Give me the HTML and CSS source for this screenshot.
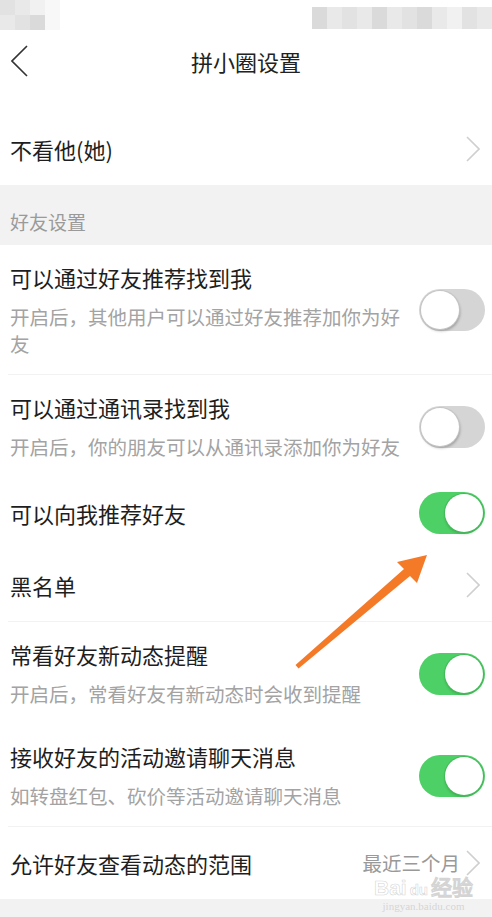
FILE: index.html
```html
<!DOCTYPE html>
<html lang="zh-CN">
<head>
    <meta charset="UTF-8">
    <meta name="viewport" content="width=device-width, initial-scale=1.0">
    <title>拼小圈设置</title>
    <link rel="stylesheet" href="styles.css">
</head>
<body>
<div class="page">
    <!-- barre d'état floutée -->
    <div class="status">
        <div class="blur-left">
            <span class="px g1"></span><span class="px g2"></span><span class="px g4"></span><span class="px g5"></span>
            <span class="px g2"></span><span class="px g1"></span><span class="px g3"></span><span class="px g5"></span>
        </div>
        <div class="blur-right">
            <span class="px g3"></span><span class="px g2"></span><span class="px g1"></span><span class="px g2"></span>
            <span class="px g3"></span><span class="px g2"></span><span class="px g1"></span><span class="px g3"></span>
            <span class="px g2"></span><span class="px g4"></span><span class="px g1"></span><span class="px g2"></span>
        </div>
    </div>

    <div class="navbar">
        <svg class="back" width="18" height="32" viewBox="0 0 18 32">
            <polyline points="16,1 1,16 16,31" fill="none" stroke="#333" stroke-width="1.6"/>
        </svg>
        <div class="nav-title">拼小圈设置</div>
    </div>

    <div class="group group-top">
        <div class="row row-single">
            <div class="row-title">不看他(她)</div>
            <svg class="chevron" width="14" height="26" viewBox="0 0 14 26">
                <polyline points="1,1 13,13 1,25" fill="none" stroke="#cfcfcf" stroke-width="1.6"/>
            </svg>
        </div>
    </div>

    <div class="section-title">好友设置</div>

    <div class="group">
        <div class="row row-double">
            <div class="row-text">
                <div class="row-title">可以通过好友推荐找到我</div>
                <div class="row-desc">开启后，其他用户可以通过好友推荐加你为好友</div>
            </div>
            <div class="switch"></div>
        </div>
        <div class="divider"></div>
        <div class="row row-double">
            <div class="row-text">
                <div class="row-title">可以通过通讯录找到我</div>
                <div class="row-desc">开启后，你的朋友可以从通讯录添加你为好友</div>
            </div>
            <div class="switch"></div>
        </div>
        <div class="row row-single">
            <div class="row-title">可以向我推荐好友</div>
            <div class="switch on"></div>
        </div>
        <div class="row row-single row-link">
            <div class="row-title">黑名单</div>
            <svg class="chevron" width="14" height="26" viewBox="0 0 14 26">
                <polyline points="1,1 13,13 1,25" fill="none" stroke="#cfcfcf" stroke-width="1.6"/>
            </svg>
        </div>
        <div class="divider"></div>
        <div class="row row-double">
            <div class="row-text">
                <div class="row-title">常看好友新动态提醒</div>
                <div class="row-desc">开启后，常看好友有新动态时会收到提醒</div>
            </div>
            <div class="switch on"></div>
        </div>
        <div class="row row-double">
            <div class="row-text">
                <div class="row-title">接收好友的活动邀请聊天消息</div>
                <div class="row-desc">如转盘红包、砍价等活动邀请聊天消息</div>
            </div>
            <div class="switch on"></div>
        </div>
        <div class="divider"></div>
        <div class="row row-single row-link">
            <div class="row-title">允许好友查看动态的范围</div>
            <div class="row-value">最近三个月</div>
            <svg class="chevron" width="14" height="26" viewBox="0 0 14 26">
                <polyline points="1,1 13,13 1,25" fill="none" stroke="#cfcfcf" stroke-width="1.6"/>
            </svg>
        </div>
    </div>

    <div class="bottom-gray"></div>

    <!-- flèche d'annotation -->
    <svg class="arrow" width="492" height="917" viewBox="0 0 492 917">
        <polygon points="427,555 417,583 410,576 298.5,668.5 295.5,665 404,569 397,562" fill="#f47a28"/>
    </svg>

    <div class="watermark">
        <div class="wm-logo">Bai<span class="wm-du">du</span>经验</div>
        <div class="wm-url">jingyan.baidu.com</div>
    </div>
</div>
</body>
</html>
```

FILE: styles.css
```css
/* Styles généraux */
body {
    margin: 0;
    background: #fff;
    font-family: "Noto Sans CJK SC", "Noto Sans", sans-serif;
    color: #222;
}

.page {
    position: relative;
    width: 492px;
    height: 917px;
    overflow: hidden;
    background: #fff;
}

/* barre d'état */
.status {
    height: 30px;
    display: flex;
    justify-content: space-between;
}

.blur-left {
    display: grid;
    grid-template-columns: repeat(4, 15px);
    grid-template-rows: repeat(2, 15px);
}

.blur-right {
    display: grid;
    grid-template-columns: repeat(12, 15px);
    grid-template-rows: 22px;
    margin-top: 7px;
}

.px { display: block; }
.g1 { background: #e2e2e2; }
.g2 { background: #e9e9e9; }
.g3 { background: #dadada; }
.g4 { background: #f1f1f1; }
.g5 { background: #f8f8f8; }

/* barre de navigation */
.navbar {
    height: 62px;
    display: flex;
    align-items: center;
    justify-content: center;
    position: relative;
}

.back {
    position: absolute;
    left: 11px;
    top: 15px;
}

.nav-title {
    font-size: 22px;
    line-height: 30px;
    color: #222;
}

/* lignes */
.group-top {
    padding-top: 21px;
}

.row {
    display: flex;
    align-items: center;
    padding-left: 10px;
    padding-right: 7px;
}

.row-single {
    padding-top: 22px;
    padding-bottom: 22px;
}

.row-single .switch {
    margin: -7px 0;
}

.row-double {
    padding-top: 18px;
    padding-bottom: 17px;
}

.row-text {
    flex: 1;
    margin-right: 14px;
}

.row-title {
    flex: 1;
    font-size: 22px;
    line-height: 28px;
    color: #1e1e1e;
}

.row-desc {
    margin-top: 12px;
    font-size: 19.5px;
    line-height: 27px;
    color: #a3a3a3;
}

.row-value {
    font-size: 19.5px;
    line-height: 28px;
    color: #999;
    margin-right: 6px;
}

.chevron {
    flex: none;
    margin-right: 5px;
}

.divider {
    height: 1px;
    margin-left: 8px;
    background: #f2f2f2;
}

.section-title {
    height: 60px;
    box-sizing: border-box;
    padding: 25px 10px 0;
    background: #f2f2f2;
    font-size: 19px;
    line-height: 24px;
    color: #9a9a9a;
}

.bottom-gray {
    height: 20px;
    background: #f2f2f2;
}

/* interrupteurs */
.switch {
    flex: none;
    position: relative;
    width: 66px;
    height: 42px;
    border-radius: 21px;
    background: #d5d5d5;
}

.switch::after {
    content: "";
    position: absolute;
    top: 2px;
    left: 2px;
    width: 38px;
    height: 38px;
    border-radius: 50%;
    background: #fff;
    box-shadow: 0 0 0 1px #c4c4c4, 1px 2px 3px rgba(0, 0, 0, 0.3);
}

.switch.on {
    background: #4dd065;
}

.switch.on::after {
    left: auto;
    right: 2px;
    box-shadow: 0 0 0 1px #46b95c, 0 2px 3px rgba(0, 0, 0, 0.2);
}

/* flèche et filigrane */
.arrow {
    position: absolute;
    left: 0;
    top: 0;
    pointer-events: none;
}

.watermark {
    position: absolute;
    left: 374px;
    top: 877px;
    text-align: center;
    pointer-events: none;
}

.wm-logo {
    font-family: "Liberation Sans", sans-serif;
    font-size: 21px;
    font-weight: bold;
    line-height: 21px;
    color: rgba(255, 255, 255, 0.6);
    -webkit-text-stroke: 0.6px rgba(170, 170, 170, 0.5);
}

.wm-du {
    font-size: 15px;
    margin: 0 3px;
}

.wm-url {
    font-family: "Liberation Serif", serif;
    font-size: 11px;
    line-height: 13px;
    color: rgba(200, 200, 200, 0.7);
}
```
